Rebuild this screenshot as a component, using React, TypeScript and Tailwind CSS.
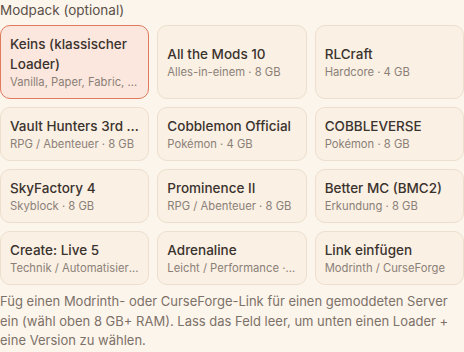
import { useState } from 'react'

interface Pack { name: string; info: string }

const packs: Pack[] = [
  { name: 'Keins (klassischer Loader)', info: 'Vanilla, Paper, Fabric, Forge, NeoForge' },
  { name: 'All the Mods 10', info: 'Alles-in-einem · 8 GB' },
  { name: 'RLCraft', info: 'Hardcore · 4 GB' },
  { name: 'Vault Hunters 3rd Edition', info: 'RPG / Abenteuer · 8 GB' },
  { name: 'Cobblemon Official', info: 'Pokémon · 4 GB' },
  { name: 'COBBLEVERSE', info: 'Pokémon · 8 GB' },
  { name: 'SkyFactory 4', info: 'Skyblock · 8 GB' },
  { name: 'Prominence II', info: 'RPG / Abenteuer · 8 GB' },
  { name: 'Better MC (BMC2)', info: 'Erkundung · 8 GB' },
  { name: 'Create: Live 5', info: 'Technik / Automatisierung · 6 GB' },
  { name: 'Adrenaline', info: 'Leicht / Performance · 2 GB' },
  { name: 'Link einfügen', info: 'Modrinth / CurseForge' },
]

export default function App() {
  const [selected, setSelected] = useState(0)

  return (
    <div className="min-h-screen bg-[#fcf5ec] font-['Inter','Noto_Sans',sans-serif]">
      <div className="text-[13.5px] leading-5 text-[#5b5048]">Modpack (optional)</div>
      <div className="grid grid-cols-3 gap-2 mt-[5px]">
        {packs.map((p, i) => (
          <button
            key={p.name}
            type="button"
            onClick={() => setSelected(i)}
            className={`text-left rounded-[10px] border px-[9px] pt-[8px] pb-[7px] min-w-0 ${
              selected === i ? 'bg-[#fbe7dd] border-[#e07a5c]' : 'bg-[#faf0e4] border-[#eddfcd]'
            }`}
          >
            <div className={`text-[13.5px] leading-[20px] font-medium text-[#3b332e] ${i === 0 ? '' : 'truncate'}`}>{p.name}</div>
            <div className="text-[11.25px] leading-[17px] text-[#8b8078] truncate">{p.info}</div>
          </button>
        ))}
      </div>
      <p className="mt-[7px] text-[13px] leading-[19.5px] text-[#7d7168]">
        Füg einen Modrinth- oder CurseForge-Link für einen gemoddeten Server ein (wähl oben 8 GB+ RAM). Lass das Feld leer, um unten einen Loader + eine Version zu wählen.
      </p>
    </div>
  )
}
